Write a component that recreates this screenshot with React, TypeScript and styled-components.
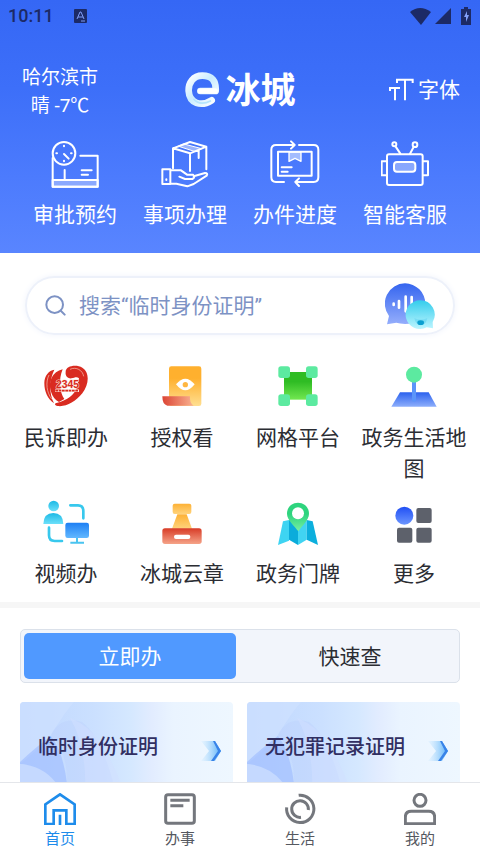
import React from "react";
import styled, { createGlobalStyle } from "styled-components";

const GlobalStyle = createGlobalStyle`
  * { box-sizing: border-box; }
  body {
    margin: 0;
    background: #fff;
    font-family: Roboto, "Noto Sans CJK SC", sans-serif;
    color: #2b2d33;
  }
  button, input { font: inherit; color: inherit; border: 0; background: none; padding: 0; margin: 0; }
  button { cursor: pointer; }
  a { color: inherit; text-decoration: none; }
  svg { display: block; flex: none; }
`;

const Screen = styled.div`
  height: 100vh;
  display: flex;
  flex-direction: column;
  overflow: hidden;
`;

const Content = styled.main`
  flex: 1;
  min-height: 0;
  overflow-y: auto;
  scrollbar-width: none;
`;

const Hero = styled.header`
  background: linear-gradient(#3567f5, #3d6ff9 35%, #4c7bfd 70%, #5985ff);
  color: #fff;
  padding-bottom: 22px;
`;

const StatusBar = styled.div`
  display: flex;
  align-items: center;
  height: 32px;
  padding: 0 8px;
  color: #1c2a66;
`;

const Clock = styled.time`
  font: 500 18px/32px Roboto, sans-serif;
  margin-right: 20px;
`;

const StatusIcons = styled.div`
  display: flex;
  align-items: center;
  gap: 4px;
  margin-left: auto;
`;

const TopBar = styled.div`
  display: grid;
  grid-template-columns: 1fr auto 1fr;
  align-items: center;
  padding: 28px 20px 0;
  height: 82px;
`;

const Weather = styled.div`
  justify-self: start;
  width: 80px;
  padding-top: 4px;
  font-size: 19px;
  line-height: 28px;
  text-align: center;
  white-space: nowrap;
`;

const Brand = styled.h1`
  display: flex;
  align-items: center;
  gap: 5px;
  margin: 0;
  font-size: 35px;
  line-height: 36px;
  font-weight: 700;
`;

const BrandName = styled.span`
  padding-top: 4px;
`;

const FontButton = styled.button`
  justify-self: end;
  display: flex;
  align-items: center;
  gap: 4px;
  font-size: 21px;
  line-height: 32px;
`;

const Shortcuts = styled.nav`
  display: grid;
  grid-template-columns: repeat(4, 1fr);
  padding: 26px 20px 0;
`;

const Shortcut = styled.a`
  display: flex;
  flex-direction: column;
  align-items: center;
  gap: 11px;
  font-size: 21px;
  line-height: 32px;
`;

const SearchBox = styled.form`
  display: flex;
  align-items: center;
  margin: 23px 25px 0;
  height: 59px;
  padding: 0 18px;
  gap: 13px;
  border: 2px solid #edf1fa;
  border-radius: 30px;
  box-shadow: 0 0 6px #f1f4fc;
`;

const SearchInput = styled.input`
  flex: 1;
  min-width: 0;
  height: 40px;
  outline: 0;
  font-size: 21px;
  &::placeholder { color: #7d92c4; opacity: 1; }
`;

const Services = styled.nav`
  display: grid;
  grid-template-columns: repeat(4, 1fr);
  row-gap: 14px;
  padding: 28px 8px 12px;
  border-bottom: 6px solid #f6f6f6;
`;

const Service = styled.a`
  display: flex;
  flex-direction: column;
  align-items: center;
  gap: 14px;
  font-size: 21px;
  line-height: 31px;
  text-align: center;
`;

const Tabs = styled.div`
  display: grid;
  grid-template-columns: 1fr 1fr;
  gap: 8px;
  margin: 21px 20px 0;
  padding: 3px;
  height: 54px;
  border: 1px solid #dbe1ea;
  border-radius: 5px;
  background: #f2f5fb;
`;

const Tab = styled.button<{ $active?: boolean }>`
  padding-top: 2px;
  border-radius: 5px;
  font-size: 21px;
  line-height: 32px;
  background: ${(p) => (p.$active ? "#5099ff" : "transparent")};
  color: ${(p) => (p.$active ? "#fff" : "#2b2d33")};
`;

const Cards = styled.div`
  display: grid;
  grid-template-columns: 1fr 1fr;
  gap: 14px;
  padding: 19px 20px 16px;
`;

const Card = styled.a`
  position: relative;
  display: flex;
  align-items: center;
  justify-content: space-between;
  height: 90px;
  padding: 0 12px 0 18px;
  border-radius: 4px;
  overflow: hidden;
  background: linear-gradient(90deg, #bfd7fe, #cbe0ff 35%, #d5e8ff 52%, #e2ecff 62%, #eaf4ff 72%, #eef7ff);
`;

const CardArt = styled.svg`
  position: absolute;
  left: 0;
  top: 0;
`;

const CardTitle = styled.span`
  position: relative;
  font-size: 20px;
  line-height: 30px;
  font-weight: 500;
  color: #312f62;
  white-space: nowrap;
`;

const CardArrow = styled.svg`
  position: relative;
  margin-top: 8px;
`;

const BottomNav = styled.nav`
  display: grid;
  grid-template-columns: repeat(4, 1fr);
  flex: none;
  height: 71px;
  padding-top: 10px;
  border-top: 1px solid #e4e6ea;
  background: #fff;
`;

const NavItem = styled.a<{ $active?: boolean }>`
  display: flex;
  flex-direction: column;
  align-items: center;
  gap: 3px;
  font-size: 15px;
  line-height: 22px;
  color: ${(p) => (p.$active ? "#1e8ceb" : "#55585f")};
`;

const line = { fill: "none", stroke: "#fff", strokeWidth: 6, strokeLinejoin: "round", strokeLinecap: "round" } as const;

const AppointmentIcon = () => (
  <svg width="48" height="48" viewBox="155 48 144 144" {...line}>
    <path d="M160 102V188H295V95H243" />
    <path d="M160 168H295V188H160Z" fill="#fff" fillOpacity=".35" />
    <circle cx="194" cy="88" r="34" />
    <path d="M194 90L208 104M196 138V164M247 139H277M247 152H266" />
    <path d="M194 65V67M194 110V112M171 88H173M215 88H217" />
  </svg>
);

const MattersIcon = () => (
  <svg width="48" height="48" viewBox="484 48 144 144" {...line}>
    <path d="M520 133V73L571 54L620 68V136M520 73L571 88L620 68M571 88V141M597 78V102" />
    <path d="M537 67L587 83L606 74L553 60Z" fill="#fff" fillOpacity=".45" strokeWidth="3" />
    <path d="M488 136H512V180H488ZM512 139H544L562 152H580Q588 160 578 165H556L539 158M582 157L616 147Q626 147 621 155L582 180L563 187L530 179H512M500 166V168" />
  </svg>
);

const ProgressIcon = () => (
  <svg width="50" height="48" viewBox="92 48 150 144" {...line}>
    <path d="M134 174H110Q96 174 96 160V77Q96 63 110 63H164M155 52L166 63L155 74M179 63H223Q237 63 237 77V160Q237 174 223 174H169M179 163L168 174L179 186" />
    <path d="M116 83H217V155H116ZM127 130H157M127 143H145" />
    <path d="M149 84H185V112L167 103L149 112Z" fill="#fff" fillOpacity=".5" strokeWidth="4" />
  </svg>
);

const RobotIcon = () => (
  <svg width="48" height="48" viewBox="426 48 144 144" {...line}>
    <rect x="444" y="91" width="107" height="92" rx="6" />
    <rect x="465" y="114" width="64" height="29" rx="9" fill="#fff" fillOpacity=".35" />
    <path d="M443 112H428V154H443M552 112H567V154H552M470 68L484 89M524 69L513 89" />
    <circle cx="466" cy="61" r="6" />
    <circle cx="528" cy="62" r="7" />
  </svg>
);

const HotlineIcon = () => (
  <svg width="46" height="46" viewBox="132 38 138 138">
    <path d="M166 58C150 60 136 76 136 98C136 124 146 146 165 159C150 128 150 92 166 58Z" fill="#d92b20" />
    <path d="M191 57C160 64 146 94 156 124C161 139 168 148 180 155L196 146C182 126 178 88 191 57Z" fill="#d92b20" />
    <path d="M200 66C198 46 232 41 250 52C273 66 270 103 250 129C229 155 202 170 176 167C165 165 166 158 175 157C205 149 226 134 233 112L240 84C234 78 226 82 218 84C208 86 198 78 200 66Z" fill="#d92b20" />
    <path d="M150 74C139 96 143 127 158 146M213 57C232 48 251 60 254 78" fill="none" stroke="#f8c9b8" strokeWidth="2" />
    <text x="171" y="114" fontFamily="Liberation Sans, sans-serif" fontWeight="700" fontSize="31" fill="#d92b20" stroke="#fbe3da" strokeWidth="3" paintOrder="stroke">2345</text>
    <path d="M168 121H240" stroke="#fbe3da" strokeWidth="8" />
    <path d="M169 121H239" stroke="#d92b20" strokeWidth="5" strokeDasharray="8 2" />
  </svg>
);

const AuthorizeIcon = () => (
  <svg width="46" height="46" viewBox="476 38 138 138">
    <defs>
      <linearGradient id="auA" x1="0" y1="0" x2="0" y2="1"><stop offset=".3" stopColor="#ffb02e" /><stop offset="1" stopColor="#ffdf91" /></linearGradient>
      <linearGradient id="auB"><stop offset="0" stopColor="#dc4535" /><stop offset="1" stopColor="#f9b391" /></linearGradient>
    </defs>
    <rect x="506" y="48" width="97" height="119" rx="7" fill="url(#auA)" />
    <path d="M486 138H569Q567 158 580 166H501Q486 163 486 138Z" fill="url(#auB)" />
    <path d="M527 102Q555 68 583 102Q555 138 527 102Z" fill="#fff" />
    <circle cx="555" cy="103" r="8" fill="#ffb640" />
  </svg>
);

const GridIcon = () => (
  <svg width="46" height="46" viewBox="105 38 138 138">
    <defs><linearGradient id="grA" x1="0" y1="0" x2="0" y2="1"><stop offset=".35" stopColor="#2fbc24" /><stop offset="1" stopColor="#72e750" /></linearGradient></defs>
    <rect x="132" y="65" width="84" height="83" fill="url(#grA)" />
    {[[115, 48], [198, 48], [115, 132], [198, 132]].map(([x, y]) => (
      <rect key={`${x}-${y}`} x={x} y={y} width="35" height="35" rx="8" fill="#5ceaa0" />
    ))}
  </svg>
);

const JoystickIcon = () => (
  <svg width="46" height="46" viewBox="453 38 138 138">
    <defs><linearGradient id="joA" x1="0" y1="0" x2="0" y2="1"><stop stopColor="#2c62ee" /><stop offset="1" stopColor="#8daefb" /></linearGradient></defs>
    <path d="M480 126H566L590 169H454Z" fill="url(#joA)" />
    <rect x="516" y="90" width="12" height="64" rx="6" fill="#5b95fa" />
    <circle cx="522" cy="73" r="24" fill="#5ceaa0" />
  </svg>
);

const VideoIcon = () => (
  <svg width="46" height="46" viewBox="130 40 138 138">
    <defs>
      <linearGradient id="viA" x1="0" y1="0" x2="0" y2="1"><stop stopColor="#1cb9e5" /><stop offset="1" stopColor="#6ce0fa" /></linearGradient>
      <linearGradient id="viB" x1="0" y1="0" x2="0" y2="1"><stop stopColor="#1d7ff4" /><stop offset="1" stopColor="#62b8ff" /></linearGradient>
    </defs>
    <circle cx="162" cy="61" r="16" fill="url(#viA)" />
    <path d="M131 115Q132 82 161 82Q190 82 191 115Z" fill="url(#viA)" />
    <path d="M212 59H235Q251 59 251 76V98M148 126V149Q148 166 165 166H187" fill="none" stroke="#38c8ed" strokeWidth="8" strokeLinecap="round" />
    <rect x="197" y="111" width="71" height="46" rx="7" fill="url(#viB)" />
    <path d="M232 157V171M212 171H253" stroke="#4ac4f0" strokeWidth="6" />
  </svg>
);

const StampIcon = () => (
  <svg width="46" height="46" viewBox="474 40 138 138">
    <defs>
      <linearGradient id="stA" x1="0" y1="0" x2="0" y2="1"><stop stopColor="#fdb135" /><stop offset="1" stopColor="#ffd37c" /></linearGradient>
      <linearGradient id="stB" x1="0" y1="0" x2="0" y2="1"><stop stopColor="#d83c27" /><stop offset="1" stopColor="#f5a388" /></linearGradient>
    </defs>
    <rect x="515" y="54" width="56" height="31" rx="6" fill="url(#stA)" />
    <path d="M529 86H557L573 129H513Z" fill="url(#stA)" />
    <rect x="484" y="128" width="118" height="47" rx="8" fill="url(#stB)" />
    <rect x="519" y="147" width="49" height="13" rx="6" fill="#fff" />
  </svg>
);

const MapIcon = () => (
  <svg width="46" height="46" viewBox="107 40 138 138">
    <defs><linearGradient id="maA" x1="0" y1="0" x2="0" y2="1"><stop offset=".4" stopColor="#2ed47e" /><stop offset="1" stopColor="#79f0a5" /></linearGradient></defs>
    <path d="M131 107L149 103V165L116 178Z" fill="#3ed4f2" />
    <path d="M149 103L176 109V178L149 162Z" fill="#0bacdb" />
    <path d="M176 109L202 103V162L176 178Z" fill="#41d4f2" />
    <path d="M202 103L220 107L236 178L202 162Z" fill="#0cafdd" />
    <path d="M176 51C195 51 209 65 209 84C209 104 187 121 177 137C166 121 143 104 143 84C143 65 157 51 176 51Z" fill="url(#maA)" />
    <circle cx="176" cy="83" r="18" fill="#fff" />
  </svg>
);

const MoreIcon = () => (
  <svg width="46" height="46" viewBox="449 40 138 138">
    <defs><linearGradient id="moA" x1="0" y1="0" x2="0" y2="1"><stop stopColor="#204ff4" /><stop offset="1" stopColor="#6c96ff" /></linearGradient></defs>
    <circle cx="489" cy="90" r="27" fill="url(#moA)" />
    <g fill="#5d616b">
      <rect x="525" y="67" width="46" height="45" rx="6" />
      <rect x="467" y="126" width="46" height="45" rx="6" />
      <rect x="525" y="126" width="46" height="45" rx="6" />
    </g>
  </svg>
);

const VoiceIcon = () => (
  <svg width="50" height="46" viewBox="1156 50 150 138">
    <defs>
      <linearGradient id="voA" x1="0" y1="0" x2="0" y2="1"><stop stopColor="#3565ef" /><stop offset="1" stopColor="#95aefc" /></linearGradient>
      <linearGradient id="voB" x1="0" y1="0" x2="0" y2="1"><stop stopColor="#34cdec" /><stop offset="1" stopColor="#bdf5ff" /></linearGradient>
    </defs>
    <path d="M1216 51A61 61 0 1 1 1216 173Q1200 172 1190 169L1162 174L1168 149A61 61 0 0 1 1216 51Z" fill="url(#voA)" />
    <path d="M1182 112V116M1198 104V124M1218 91V135M1236 92V112" stroke="#fff" strokeWidth="8" strokeLinecap="round" />
    <path d="M1262 102A43 43 0 0 1 1299 167L1300 186L1281 183A43 43 0 1 1 1262 102Z" fill="url(#voB)" />
    <path d="M1244 155Q1263 164 1283 155Q1279 177 1263 177Q1248 176 1244 155Z" fill="#78ddf4" />
    <ellipse cx="1263" cy="169" rx="10" ry="7" fill="#0a9fd0" />
  </svg>
);

const BrandMark = () => (
  <svg width="36" height="36" viewBox="553 206 108 108" fill="none">
    <defs><linearGradient id="brA" x1="0" y1="0" x2="1" y2="1"><stop stopColor="#fff" /><stop offset=".45" stopColor="#c9ecff" /><stop offset="1" stopColor="#fff" /></linearGradient></defs>
    <path d="M602 263H648Q651 217 608 217C580 217 566 239 567 263C569 300 604 311 636 291" stroke="url(#brA)" strokeWidth="20" strokeLinecap="round" strokeLinejoin="round" />
    <path d="M602 263H646" stroke="#fff" strokeWidth="17" strokeLinecap="round" />
    <path d="M581 286Q599 309 634 292" stroke="#b5e5fd" strokeWidth="5" />
  </svg>
);

const shortcuts = [
  { label: "审批预约", Icon: AppointmentIcon },
  { label: "事项办理", Icon: MattersIcon },
  { label: "办件进度", Icon: ProgressIcon },
  { label: "智能客服", Icon: RobotIcon },
];

const services = [
  { label: "民诉即办", Icon: HotlineIcon },
  { label: "授权看", Icon: AuthorizeIcon },
  { label: "网格平台", Icon: GridIcon },
  { label: "政务生活地图", Icon: JoystickIcon },
  { label: "视频办", Icon: VideoIcon },
  { label: "冰城云章", Icon: StampIcon },
  { label: "政务门牌", Icon: MapIcon },
  { label: "更多", Icon: MoreIcon },
];

const HomeIcon = () => (
  <svg width="32" height="32" viewBox="132 54 96 96" fill="none" stroke="currentColor" strokeWidth="8">
    <path d="M136 147V88L180 58L224 88V147H199V106H161V147ZM180 119V150" />
  </svg>
);
const WorkIcon = () => (
  <svg width="32" height="32" viewBox="492 54 96 96" fill="none" stroke="#74777d" strokeWidth="9">
    <rect x="497" y="59" width="86" height="86" rx="7" />
    <path d="M511 76H569M511 92H550" />
  </svg>
);
const LifeIcon = () => (
  <svg width="32" height="32" viewBox="132 54 96 96" fill="none" stroke="#74777d" strokeWidth="9">
    <path d="M176 61A41 41 0 1 1 140 97" />
    <path d="M205 105A25 25 0 1 0 183 127" />
  </svg>
);
const MeIcon = () => (
  <svg width="32" height="32" viewBox="492 54 96 96" fill="none" stroke="#74777d" strokeWidth="9">
    <circle cx="540" cy="76" r="18" />
    <path d="M496 146V127Q496 109 514 109H566Q584 109 584 127V146Z" />
  </svg>
);

const navItems = [
  { label: "首页", Icon: HomeIcon },
  { label: "办事", Icon: WorkIcon },
  { label: "生活", Icon: LifeIcon },
  { label: "我的", Icon: MeIcon },
];

const ServiceCard = ({ title }: { title: string }) => (
  <Card href="#">
    <CardArt width="150" height="92" viewBox="0 0 150 92" aria-hidden="true">
      <path d="M0 62Q18 48 31 33Q45 10 54 0H0Z" fill="#cfe1ff" opacity=".7" />
      <path d="M31 33Q40 14 62 20Q83 36 96 92H46Q51 55 31 33Z" fill="#b9cffd" opacity=".35" />
      <path d="M0 60Q16 45 31 34Q45 52 48 92H30Q19 64 0 62Z" fill="#9dbaff" opacity=".6" />
      <path d="M0 62Q29 64 43 92H0Z" fill="#c5d9ff" />
      <path d="M50 16Q72 24 86 50Q98 70 104 92H65Q67 45 50 16Z" fill="#d1e0ff" opacity=".5" />
    </CardArt>
    <CardTitle>{title}</CardTitle>
    <CardArrow width="20" height="20" viewBox="0 0 20 20" aria-hidden="true">
      <defs><linearGradient id="arA"><stop stopColor="#d5edff" stopOpacity=".3" /><stop offset="1" stopColor="#51adf8" /></linearGradient></defs>
      <path d="M0 0H14L20 10L14 20H0L8 10Z" fill="url(#arA)" />
      <path d="M12 0H14L20 10L13 20H10L17 10Z" fill="#3983e8" />
    </CardArrow>
  </Card>
);

export default function App() {
  return (
    <>
      <GlobalStyle />
      <Screen>
        <Content>
          <Hero>
            <StatusBar>
              <Clock>10:11</Clock>
              <svg width="13" height="14" viewBox="0 0 13 14">
                <rect width="13" height="14" rx="1" fill="currentColor" />
                <path d="M3 10L6 3H7L10 10M4 8H9M7 12H11" fill="none" stroke="#7f9cf5" />
              </svg>
              <StatusIcons>
                <svg width="21" height="17" viewBox="0 0 21 17"><path d="M0 4Q10 -4 21 4L11 17Z" fill="currentColor" /></svg>
                <svg width="16" height="16" viewBox="0 0 16 16"><path d="M16 0V16H0Z" fill="currentColor" /></svg>
                <svg width="17" height="18" viewBox="-6 0 17 18"><path d="M3 0H7V2H10V18H0V2H3Z" fill="currentColor" /><path d="M6 4L3 10H5V15L8 8H6Z" fill="#83a1fa" /></svg>
              </StatusIcons>
            </StatusBar>
            <TopBar>
              <Weather>哈尔滨市<br />晴 -7℃</Weather>
              <Brand><BrandMark /><BrandName>冰城</BrandName></Brand>
              <FontButton type="button">
                <svg width="25" height="24" viewBox="446 224 75 72" fill="none" stroke="#fff" strokeWidth="6">
                  <path d="M470 239V229H517V239M494 229V291M449 263V254H479M464 254V291" />
                </svg>
                字体
              </FontButton>
            </TopBar>
            <Shortcuts aria-label="常用功能">
              {shortcuts.map(({ label, Icon }) => (
                <Shortcut href="#" key={label}><Icon />{label}</Shortcut>
              ))}
            </Shortcuts>
          </Hero>
          <SearchBox role="search">
            <svg width="21" height="21" viewBox="134 88 63 63" fill="none" stroke="#7d92c4" strokeWidth="6" strokeLinecap="round">
              <circle cx="163" cy="117" r="25" /><path d="M182 136L193 147" />
            </svg>
            <SearchInput aria-label="搜索" placeholder="搜索“临时身份证明”" />
            <button type="button" aria-label="语音助手"><VoiceIcon /></button>
          </SearchBox>
          <Services aria-label="服务">
            {services.map(({ label, Icon }) => (
              <Service href="#" key={label}><Icon />{label}</Service>
            ))}
          </Services>
          <Tabs role="tablist">
            <Tab type="button" role="tab" aria-selected="true" $active>立即办</Tab>
            <Tab type="button" role="tab" aria-selected="false">快速查</Tab>
          </Tabs>
          <Cards>
            <ServiceCard title="临时身份证明" />
            <ServiceCard title="无犯罪记录证明" />
          </Cards>
        </Content>
        <BottomNav aria-label="主导航">
          {navItems.map(({ label, Icon }, i) => (
            <NavItem href="#" key={label} $active={i === 0}><Icon />{label}</NavItem>
          ))}
        </BottomNav>
      </Screen>
    </>
  );
}
